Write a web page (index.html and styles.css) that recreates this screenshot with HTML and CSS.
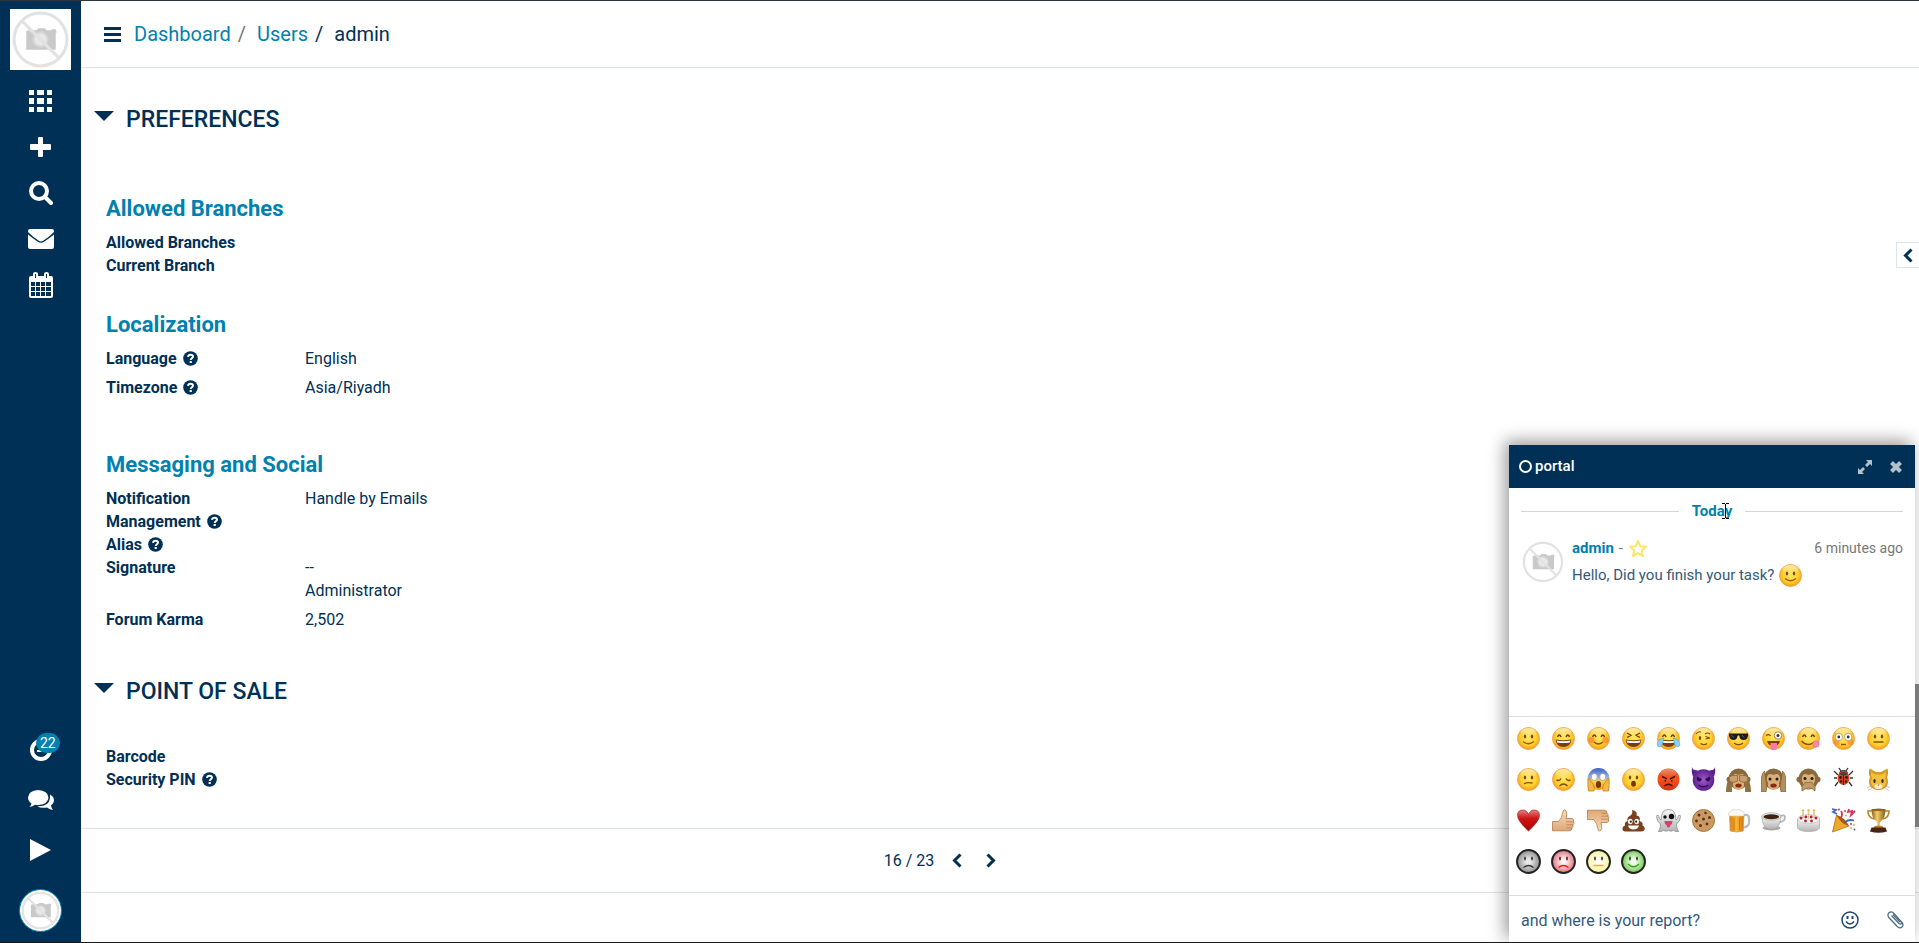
FILE: index.html
```html
<!DOCTYPE html>
<html lang="en">
<head>
    <meta charset="UTF-8">
    <meta name="viewport" content="width=device-width, initial-scale=1.0">
    <title>admin - Users</title>
    <link rel="stylesheet" href="styles.css">
</head>
<body>
    <!-- Shared shapes -->
    <svg class="sprite" aria-hidden="true">
        <defs>
            <radialGradient id="gYellow" cx="50%" cy="45%" r="55%">
                <stop offset="0" stop-color="#ffe566"/>
                <stop offset="0.65" stop-color="#ffd02e"/>
                <stop offset="1" stop-color="#f29a1f"/>
            </radialGradient>
            <linearGradient id="gShine" x1="0" y1="0" x2="0" y2="1">
                <stop offset="0" stop-color="#fff" stop-opacity="0.6"/>
                <stop offset="1" stop-color="#fff" stop-opacity="0"/>
            </linearGradient>
            <linearGradient id="gRed" x1="0" y1="0" x2="0" y2="1">
                <stop offset="0" stop-color="#e0531f"/>
                <stop offset="0.5" stop-color="#f4511e"/>
                <stop offset="1" stop-color="#c93616"/>
            </linearGradient>
            <linearGradient id="gScream" x1="0" y1="0" x2="0" y2="1">
                <stop offset="0" stop-color="#3b5fc4"/>
                <stop offset="0.4" stop-color="#8fb0e6"/>
                <stop offset="0.6" stop-color="#ffd53e"/>
                <stop offset="1" stop-color="#f2a022"/>
            </linearGradient>
            <radialGradient id="gPurple">
                <stop offset="0" stop-color="#a259c9"/>
                <stop offset="1" stop-color="#5d1f8f"/>
            </radialGradient>
            <linearGradient id="gHeart" x1="0" y1="0" x2="0" y2="1">
                <stop offset="0" stop-color="#e88080"/>
                <stop offset="0.4" stop-color="#cf1515"/>
                <stop offset="1" stop-color="#a80000"/>
            </linearGradient>
            <linearGradient id="gSkin" x1="0" y1="0" x2="0" y2="1">
                <stop offset="0" stop-color="#f8dcb8"/>
                <stop offset="1" stop-color="#dfa876"/>
            </linearGradient>
            <linearGradient id="gGold" x1="0" y1="0" x2="1" y2="0">
                <stop offset="0" stop-color="#8a5a16"/>
                <stop offset="0.4" stop-color="#f3d06b"/>
                <stop offset="1" stop-color="#8a5a16"/>
            </linearGradient>
            <linearGradient id="gBeer" x1="0" y1="0" x2="1" y2="0">
                <stop offset="0" stop-color="#d97c10"/>
                <stop offset="0.5" stop-color="#f9b733"/>
                <stop offset="1" stop-color="#cf6f0c"/>
            </linearGradient>
            <linearGradient id="gGrey" x1="0" y1="0" x2="0" y2="1">
                <stop offset="0" stop-color="#f7f7f7"/>
                <stop offset="1" stop-color="#b4b4b4"/>
            </linearGradient>
            <radialGradient id="gRingGrey"><stop offset="0.2" stop-color="#e8e8e8"/><stop offset="1" stop-color="#8e8e8e"/></radialGradient>
            <radialGradient id="gRingRed"><stop offset="0.2" stop-color="#fff0f0"/><stop offset="1" stop-color="#e2717d"/></radialGradient>
            <radialGradient id="gRingYellow"><stop offset="0.2" stop-color="#fffff4"/><stop offset="1" stop-color="#f7f39b"/></radialGradient>
            <radialGradient id="gRingGreen"><stop offset="0.2" stop-color="#efffe8"/><stop offset="1" stop-color="#72c552"/></radialGradient>
        </defs>

        <symbol id="no-photo" viewBox="0 0 60 60">
            <path fill="#c9c9c9" d="M18 21h8l2-2h6l2 2h5v-1h4l1 3h-1v17H16V22z"/>
            <circle cx="30" cy="30" r="8" fill="#d6d6d6"/>
            <circle cx="30" cy="30" r="6" fill="#e8e8e8"/>
            <path stroke="#e2e2e2" stroke-width="3" d="M12 12l37 37"/>
            <circle cx="30" cy="30" r="26" fill="none" stroke="#e2e2e2" stroke-width="3"/>
        </symbol>
        <symbol id="help" viewBox="0 0 15 15">
            <circle cx="7.500" cy="7.500" r="7.300" fill="#003055"/>
            <path fill="none" stroke="#fff" stroke-width="2" d="M5 5.800C5.200 4.200 6.300 3.700 7.500 3.700c1.500 0 2.500.8 2.500 1.900 0 1.600-2.300 1.600-2.300 3.500"/>
            <path fill="#fff" d="M6.600 10h2.200v2H6.600z"/>
        </symbol>
        <symbol id="chev-left" viewBox="0 0 10 15"><path fill="none" stroke="#003055" stroke-width="3" d="M8.500 1.500l-6 6 6 6"/></symbol>
        <symbol id="chev-right" viewBox="0 0 10 15"><path fill="none" stroke="#003055" stroke-width="3" d="M1.500 1.500l6 6-6 6"/></symbol>

        <symbol id="face" viewBox="0 0 25 25">
            <circle cx="12.500" cy="12.500" r="11" fill="url(#gYellow)" stroke="#eda244" stroke-width="0.800"/>
            <ellipse cx="12.500" cy="6.500" rx="8" ry="4.500" fill="url(#gShine)"/>
        </symbol>
        <symbol id="eyes" viewBox="0 0 25 25">
            <g fill="#7a4a12"><ellipse cx="9" cy="10.500" rx="1.200" ry="1.900"/><ellipse cx="16" cy="10.500" rx="1.200" ry="1.900"/></g>
        </symbol>
        <symbol id="happy-eyes" viewBox="0 0 25 25">
            <path fill="none" stroke="#6b3d0c" stroke-width="1.400" d="M6.500 11q1.800-4 3.600 0M15 11q1.800-4 3.600 0"/>
        </symbol>
        <symbol id="grin" viewBox="0 0 25 25">
            <path fill="#7a3d10" d="M4.500 13.500q8 1.600 16 0-1 7.500-8 7.500t-8-7.500z"/>
            <path fill="#fff" d="M5.500 14.500q7 1.400 14 0l-.6 2q-6.400 1.200-12.800 0z"/>
        </symbol>

        <symbol id="e-smile" viewBox="0 0 25 25"><use href="#face"/><use href="#eyes"/><path fill="none" stroke="#9a5c12" stroke-width="1.300" d="M7 15.500q5.500 4.500 11 0"/></symbol>
        <symbol id="e-grin" viewBox="0 0 25 25"><use href="#face"/><use href="#happy-eyes"/><use href="#grin"/></symbol>
        <symbol id="e-blush" viewBox="0 0 25 25"><use href="#face"/><g fill="#f4743a" opacity="0.600"><circle cx="5.500" cy="14" r="3"/><circle cx="19.500" cy="14" r="3"/></g><use href="#happy-eyes"/><path fill="none" stroke="#9a4a12" stroke-width="1.300" d="M8 16q4.500 4 9 0"/></symbol>
        <symbol id="e-laugh" viewBox="0 0 25 25"><use href="#face"/><use href="#grin"/><path fill="none" stroke="#6b3d0c" stroke-width="1.300" d="M6 7l4 2.300-4 2.200M19 7l-4 2.300 4 2.200"/></symbol>
        <symbol id="e-joy" viewBox="0 0 25 25"><use href="#face"/><use href="#happy-eyes"/><use href="#grin"/><g fill="#8bd0f5" stroke="#4e9fd6" stroke-width="0.600"><path d="M7.500 12Q1 14 1.200 18.500q.3 2.500 2.500 2.300Q7 20 7.500 12z"/><path d="M17.500 12q6.500 2 6.300 6.500-.3 2.500-2.500 2.300Q18 20 17.500 12z"/></g></symbol>
        <symbol id="e-wink" viewBox="0 0 25 25"><use href="#face"/><path fill="none" stroke="#7a4a12" stroke-width="1.200" d="M5 8q2-3 5-2M14 8q3-2 5 0M14.500 10.500l4.500 1.500M14.500 13l4.500-1M9.500 17.500q3.500 2.500 6.500 0"/><ellipse cx="9" cy="12" rx="1.200" ry="1.900" fill="#7a4a12"/></symbol>
        <symbol id="e-cool" viewBox="0 0 25 25"><use href="#face"/><path fill="#1c1c1c" d="M3 7.500h19v2q-.5 4.500-4.500 4.500T13.300 9.500h-1.600Q11 14 7.500 14T3 9.500z"/><path stroke="#777" stroke-width="0.800" d="M5.500 9l2 2.500M16 9l2 2.500"/><path fill="none" stroke="#8a4f10" stroke-width="1.400" d="M8 17q4.500 3.500 9 0"/></symbol>
        <symbol id="e-tongue" viewBox="0 0 25 25"><use href="#face"/><path fill="none" stroke="#7a4a12" stroke-width="1.400" d="M5 9.500q3-2 4.500.5"/><circle cx="17" cy="9.500" r="3.700" fill="#fff" stroke="#8a6a3a" stroke-width="0.800"/><circle cx="17" cy="9.500" r="1.500" fill="#333"/><path fill="#7a3d10" d="M6 15h13q-1 5-6.500 5T6 15z"/><path fill="#f77ba6" d="M9.500 17h6.500v4q0 3.200-3.200 3.200T9.500 21z"/></symbol>
        <symbol id="e-yum" viewBox="0 0 25 25"><use href="#face"/><use href="#happy-eyes"/><path fill="none" stroke="#8a4f10" stroke-width="1.500" d="M5.500 15q6 6.500 13 1"/><circle cx="20" cy="18" r="3.200" fill="#f58ab0" stroke="#e0608f" stroke-width="0.600"/></symbol>
        <symbol id="e-flushed" viewBox="0 0 25 25"><use href="#face"/><g fill="#f4743a" opacity="0.500"><circle cx="5.500" cy="16" r="3"/><circle cx="19.500" cy="16" r="3"/></g><g fill="#fff" stroke="#9c8760" stroke-width="0.700"><circle cx="7.800" cy="11" r="3.700"/><circle cx="17.200" cy="11" r="3.700"/></g><circle cx="7.800" cy="11" r="1.400" fill="#333"/><circle cx="17.200" cy="11" r="1.400" fill="#333"/><path stroke="#8a4f10" stroke-width="1.400" d="M10 18.500h5"/></symbol>
        <symbol id="e-neutral" viewBox="0 0 25 25"><use href="#face"/><use href="#eyes"/><path stroke="#8a4f10" stroke-width="1.500" d="M7.500 16h10"/></symbol>

        <symbol id="e-confused" viewBox="0 0 25 25"><use href="#face"/><use href="#eyes"/><path fill="none" stroke="#8a4f10" stroke-width="1.400" d="M8 17q3-2 8.500-1"/></symbol>
        <symbol id="e-sad" viewBox="0 0 25 25"><use href="#face"/><path fill="none" stroke="#7a4a12" stroke-width="1.400" d="M5.500 13q3 1.500 4.500-1.500M15 11.500q1.500 3 4.500 1.500M8.500 19q4-4 8 0"/></symbol>
        <symbol id="e-scream" viewBox="0 0 25 25"><circle cx="12.500" cy="12" r="11" fill="url(#gScream)"/><g fill="#fff" stroke="#8a8a8a" stroke-width="0.600"><ellipse cx="8.300" cy="10" rx="3" ry="3.600"/><ellipse cx="16.700" cy="10" rx="3" ry="3.600"/></g><ellipse cx="12.500" cy="17.500" rx="2.600" ry="3.500" fill="#7a3505"/><path fill="#f5b945" stroke="#bd7316" stroke-width="0.700" d="M2 12q1.500-2 2 1l3 4q2 2 1 7H2.500q-1-5-.5-12zM23 12q-1.500-2-2 1l-3 4q-2 2-1 7h5.500q1-5 .5-12z"/></symbol>
        <symbol id="e-wow" viewBox="0 0 25 25"><use href="#face"/><use href="#eyes"/><ellipse cx="12.500" cy="16.700" rx="2.400" ry="3" fill="#7a3505"/></symbol>
        <symbol id="e-rage" viewBox="0 0 25 25"><circle cx="12.500" cy="12.500" r="11" fill="url(#gRed)"/><ellipse cx="12.500" cy="6" rx="8" ry="4" fill="url(#gShine)" opacity="0.600"/><path fill="none" stroke="#4c1200" stroke-width="1.500" d="M6 9.500l5 2.500M19 9.500L14 12M8.500 13.800h1.500M15 13.800h1.500M8.500 19q4-3.500 8 0"/></symbol>
        <symbol id="e-imp" viewBox="0 0 25 25"><path fill="#5d1f8f" d="M1 0q1 4 6 3l-5 7Q0 5 1 0zM24 0q-1 4-6 3l5 7q2-5 1-10z"/><circle cx="12.500" cy="13" r="10.800" fill="url(#gPurple)"/><path fill="#2d0b4a" d="M6 9.500l5 2.500q-1 3-3.500 2.300T6 9.500zM19 9.500L14 12q1 3 3.500 2.300T19 9.500z"/><path fill="none" stroke="#2d0b4a" stroke-width="1.500" d="M7.500 18q5 3.500 10 0"/></symbol>
        <symbol id="monkey" viewBox="0 0 25 25"><g fill="#8a6a3c"><circle cx="3.500" cy="12.500" r="3"/><circle cx="21.500" cy="12.500" r="3"/><ellipse cx="12.500" cy="12" rx="10" ry="10.500"/></g><path fill="#d8b077" d="M12.500 8Q18 5 19 10.500q.5 3.500-1 5 1 7-5.500 7T7 15.500q-1.500-1.500-1-5Q7 5 12.500 8z"/><ellipse cx="12.500" cy="18.500" rx="3.200" ry="2" fill="#8b2b16"/></symbol>
        <symbol id="e-see" viewBox="0 0 25 25"><use href="#monkey"/><path fill="#8f7040" d="M0 25q0-8 3-13h4q-2 6-1 13zM25 25q0-8-3-13h-4q2 6 1 13z"/><path fill="#c9a070" stroke="#7d5c30" stroke-width="0.700" d="M3 10q3-2.500 8.500-1.500v5.500q-4 2.500-8 .5zM22 10q-3-2.500-8.500-1.500v5.500q4 2.500 8 .5z"/></symbol>
        <symbol id="e-hear" viewBox="0 0 25 25"><use href="#monkey"/><circle cx="9" cy="12" r="1.500" fill="#241708"/><circle cx="16" cy="12" r="1.500" fill="#241708"/><path fill="#b48f5c" stroke="#7d5c30" stroke-width="0.700" d="M0 25V16Q0 7 3.500 4L5 14q1.500 5 0 11zM25 25V16q0-9-3.500-12L20 14q-1.500 5 0 11z"/></symbol>
        <symbol id="e-speak" viewBox="0 0 25 25"><use href="#monkey"/><circle cx="9" cy="11.500" r="1.500" fill="#241708"/><circle cx="16" cy="11.500" r="1.500" fill="#241708"/><path fill="#c29a68" stroke="#7d5c30" stroke-width="0.700" d="M6 24q-1-5 2-7.500 2-2 4.500-1 2.500-1 4.500 1 3 2.500 2 7.500-3-3.500-6.500-3T6 24z"/></symbol>
        <symbol id="e-bug" viewBox="0 0 25 25"><path fill="none" stroke="#333" stroke-width="1.300" d="M10 4L8 1M15 4l2-3M7 8L3 4M18 8l4-4M6 11H3M19 11h3M7 15l-3 4M18 15l3 4"/><path fill="#3b434d" d="M8 7q0-4 4.500-4T17 7z"/><ellipse cx="12.500" cy="11" rx="6" ry="7" fill="#d8431c"/><path fill="#3b434d" d="M8 7q4.500-4 9 0-4.500 2.500-9 0z"/><path stroke="#2b1a12" stroke-width="1" d="M12.500 8v10"/><g fill="#2b1a12"><circle cx="9.500" cy="10.500" r="1.400"/><circle cx="15.500" cy="10.500" r="1.400"/><circle cx="10" cy="14.500" r="1.200"/><circle cx="15" cy="14.500" r="1.200"/></g></symbol>
        <symbol id="e-cat" viewBox="0 0 25 25"><path fill="#d59a24" d="M3.500 1.500L10 5h5l6.500-3.500Q23 7 21 10q2 5 0 9-3 4-8.500 4T4 19q-2-4 0-9-2-3-.5-8.500z"/><path fill="#f2c23d" d="M5 5l4 2.500h7L20 5q0 4-1 6 2 5 0 7-3 4-6.500 4T6 18q-2-2 0-7-1-2-1-6z"/><ellipse cx="8.500" cy="14" rx="1.200" ry="2" fill="#3c2a08"/><ellipse cx="16.500" cy="14" rx="1.200" ry="2" fill="#3c2a08"/><ellipse cx="12.500" cy="19.500" rx="4" ry="2.500" fill="#fff0c4"/><path fill="#b0603a" d="M11.300 17.500h2.400l-1.200 1.500z"/><path stroke="#aaa" stroke-width="0.700" d="M6 19l-5 1.500M6 21l-4 2.500M19 19l5 1.500M19 21l4 2.500"/></symbol>

        <symbol id="e-heart" viewBox="0 0 25 25"><path fill="url(#gHeart)" stroke="#9a1010" stroke-width="0.600" d="M12.500 23Q1.500 13 1.500 7.500 1.500 2 6.800 2q4.200 0 5.700 4.500Q14 2 18.200 2q5.300 0 5.300 5.500 0 5.500-11 15.500z"/></symbol>
        <symbol id="e-up" viewBox="0 0 25 25"><path fill="url(#gSkin)" stroke="#b07a48" stroke-width="0.800" d="M1.500 13.500h6q4-4 4.300-9Q12 2 13.500 2q3.500.5 1.500 8.500h6q2.500.5 1.500 3.300 1 1.600-.5 3 .5 2-1 3 .2 3-3 3H1.500z"/><path stroke="#b07a48" stroke-width="0.700" d="M15 13.800h7M15.500 16.800H22M15.500 19.800H21"/></symbol>
        <symbol id="e-down" viewBox="0 0 25 25"><g transform="matrix(1 0 0 -1 0 25)"><use href="#e-up"/></g></symbol>
        <symbol id="e-poop" viewBox="0 0 25 25"><path fill="#7a4222" d="M11 2q6 1 4.500 5.500Q20 8 18.500 13q4 1 3 4.500 3 1.500 2 4.500-1 1.500-4 1.500h-14q-3.500 0-4-2-.5-3 2.500-4-1-3.500 2.500-4.500-1-4 3-5.500Q12 6 11 2z"/><g fill="#fff"><ellipse cx="9.300" cy="13.500" rx="2.300" ry="2.800"/><ellipse cx="15.700" cy="13.500" rx="2.300" ry="2.800"/><path d="M7 17.500h11q-1 4-5.500 4T7 17.500z"/></g><circle cx="9.800" cy="13.700" r="1.100" fill="#222"/><circle cx="15.200" cy="13.700" r="1.100" fill="#222"/></symbol>
        <symbol id="e-ghost" viewBox="0 0 25 25"><path fill="url(#gGrey)" stroke="#8d8d8d" stroke-width="0.800" d="M5 12q0-10.500 7.500-10.500T20 12q2-1 2.500-4.500 2-1 2 1-.2 5-4 7.500 0 5 2 7.500-3 .5-5-1.200-2 1.700-5 .2-3 1.500-5-.2-2 1.700-5 1.200 2-2.500 2-7.500Q.8 13.500.5 8.500q0-2 2-1Q3 11 5 12z"/><circle cx="9" cy="9" r="1.700" fill="#111"/><circle cx="15.500" cy="8.500" r="2.700" fill="#111"/><path fill="#d9406c" d="M8.500 13h8q0 3.500-2 4-.3 2.500-2 2.500t-2-2.500q-2-.5-2-4z"/></symbol>
        <symbol id="e-cookie" viewBox="0 0 25 25"><circle cx="12.500" cy="12.500" r="11" fill="#c99a62" stroke="#98622a" stroke-width="0.800"/><g fill="#5b3417"><circle cx="8" cy="7" r="1.500"/><circle cx="14.500" cy="5" r="1.300"/><circle cx="18.500" cy="9.500" r="1.500"/><circle cx="12.500" cy="11" r="1.500"/><circle cx="5.500" cy="13" r="1.400"/><circle cx="9.500" cy="17.500" r="1.500"/><circle cx="16" cy="16" r="1.400"/></g></symbol>
        <symbol id="e-beer" viewBox="0 0 25 25"><path fill="none" stroke="#b9bcc0" stroke-width="2.200" d="M17 7.500q6-2 6 2.500v5q-.5 4-6 4.500"/><path fill="url(#gBeer)" stroke="#c9a060" stroke-width="0.800" d="M3.500 6h14.500l-.8 17q-6.500 2-13 0z"/><path stroke="#c96f0c" stroke-width="0.800" d="M8 10v12M13.500 10v12"/><path fill="#fbf8ef" stroke="#c9c4b4" stroke-width="0.600" d="M3 8Q1.500 4.500 4.500 3.500 6.500.5 10 2q3-1.500 5 .5 4 .5 3 5.500z"/></symbol>
        <symbol id="e-coffee" viewBox="0 0 25 25"><ellipse cx="10.500" cy="20" rx="9" ry="2.500" fill="#aaa"/><path fill="none" stroke="#b5b5b5" stroke-width="1.800" d="M18.500 8q5.500-2 5.500 1.500 0 4-6.500 5"/><path fill="url(#gGrey)" stroke="#999" stroke-width="0.600" d="M.8 8.500q1 12 7 12.500h5q6-.5 7-12.500z"/><ellipse cx="10.300" cy="8.500" rx="9.500" ry="3.700" fill="#ececec" stroke="#999" stroke-width="0.600"/><ellipse cx="10.300" cy="8.800" rx="7.800" ry="2.500" fill="#3d2412"/></symbol>
        <symbol id="e-cake" viewBox="0 0 25 25"><path fill="url(#gGrey)" stroke="#a5a5a5" stroke-width="0.700" d="M1.500 11v9q2 3.500 11 3.500t11-3.500v-9z"/><ellipse cx="12.500" cy="11" rx="11" ry="4.500" fill="#f6f3ea" stroke="#b7b7b7" stroke-width="0.600"/><path stroke="#d8c690" stroke-width="1.600" d="M7 10V4M12.500 11V4M18 10V4"/><g fill="#f2b632"><circle cx="7" cy="2.500" r="1.200"/><circle cx="12.500" cy="2.500" r="1.200"/><circle cx="18" cy="2.500" r="1.200"/></g><g fill="#b5203c"><circle cx="5" cy="10" r="1.500"/><circle cx="9.800" cy="9" r="1.400"/><circle cx="15.200" cy="9" r="1.400"/><circle cx="20" cy="10" r="1.500"/><circle cx="9.500" cy="13" r="1.400"/><circle cx="15.500" cy="13" r="1.400"/></g></symbol>
        <symbol id="e-party" viewBox="0 0 25 25"><path fill="#eda927" stroke="#a8620e" stroke-width="0.700" d="M5.500 7L18 18 1.500 24z"/><path fill="#a65c12" d="M5.500 7q5 1 8 4.500t4.500 6.500q-5-1-8-4.500T5.500 7z"/><g fill="none" stroke-width="1.800"><path stroke="#3d68c8" d="M1 1l4 1-3 2 4 2M14 14q4-3 9-1.500"/><path stroke="#d1345c" d="M10 10q2-4 0-7M18 1l-1 3 4-1-1 4 4-4"/></g><g fill="#d1345c"><circle cx="8" cy="1.500" r="1"/><circle cx="14" cy="3" r="1"/><circle cx="20" cy="16" r="1"/></g><g fill="#e8b429"><circle cx="15" cy="7.500" r="1"/><circle cx="23" cy="17" r="1"/><circle cx="20" cy="20" r="1"/></g><circle cx="23.500" cy="21.500" r="1" fill="#3d68c8"/></symbol>
        <symbol id="e-trophy" viewBox="0 0 25 25"><path fill="none" stroke="#b5862c" stroke-width="1.700" d="M6.500 3H2q0 7 6.500 8M18.500 3H23q0 7-6.500 8"/><path fill="url(#gGold)" d="M5.500 1h14q0 9-4.500 12-1.500 1-1.500 5h-2q0-4-1.500-5Q5.500 10 5.500 1z"/><ellipse cx="12.500" cy="1.800" rx="7" ry="1.300" fill="#8f6420"/><path fill="#b5862c" d="M8 18.500q4.500-2 9 0v1.500H8z"/><path fill="#4a2312" d="M5.500 19.500h14l1.500 4q-8.500 2.500-17 0z"/></symbol>

        <symbol id="ring-eyes" viewBox="0 0 25 25"><g fill="#333"><ellipse cx="9" cy="9.500" rx="0.900" ry="2"/><ellipse cx="16" cy="9.500" rx="0.900" ry="2"/></g></symbol>
        <symbol id="e-rgrey" viewBox="0 0 25 25"><circle cx="12.500" cy="12.500" r="11.500" fill="url(#gRingGrey)" stroke="#222" stroke-width="1.900"/><use href="#ring-eyes"/><path fill="none" stroke="#333" stroke-width="1.300" d="M7.500 18.500q5-4 10 0"/></symbol>
        <symbol id="e-rred" viewBox="0 0 25 25"><circle cx="12.500" cy="12.500" r="11.500" fill="url(#gRingRed)" stroke="#222" stroke-width="1.900"/><use href="#ring-eyes"/><path fill="none" stroke="#e01e1e" stroke-width="1.300" d="M7.500 18.500q5-4 10 0"/></symbol>
        <symbol id="e-ryellow" viewBox="0 0 25 25"><circle cx="12.500" cy="12.500" r="11.500" fill="url(#gRingYellow)" stroke="#222" stroke-width="1.900"/><use href="#ring-eyes"/><path stroke="#ffa51e" stroke-width="1.500" d="M7.500 16.500h10"/></symbol>
        <symbol id="e-rgreen" viewBox="0 0 25 25"><circle cx="12.500" cy="12.500" r="11.500" fill="url(#gRingGreen)" stroke="#222" stroke-width="1.900"/><use href="#ring-eyes"/><path fill="none" stroke="#3b9a22" stroke-width="1.300" d="M7 15q5.500 5.500 11 0"/></symbol>
    </svg>

    <!-- Sidebar -->
    <nav class="sidebar">
        <a class="logo" href="#" aria-label="Home"><svg><use href="#no-photo"/></svg></a>
        <button class="side-btn" aria-label="Apps">
            <svg width="23" height="22" viewBox="0 0 23 22" fill="#fff"><path d="M0 0h5v5H0zM8 0h7v5H8zM18 0h5v5h-5zM0 8h5v6H0zM8 8h7v6H8zM18 8h5v6h-5zM0 17h5v5H0zM8 17h7v5H8zM18 17h5v5h-5z"/></svg>
        </button>
        <button class="side-btn" aria-label="Create">
            <svg width="21" height="20" viewBox="0 0 21 20" fill="#fff"><path d="M9 0h3q1 0 1 1v6h7q1 0 1 1v4q0 1-1 1h-7v6q0 1-1 1H9q-1 0-1-1v-6H1q-1 0-1-1V8q0-1 1-1h7V1q0-1 1-1z"/></svg>
        </button>
        <button class="side-btn" aria-label="Search">
            <svg width="24" height="24" viewBox="0 0 24 24" fill="none" stroke="#fff"><circle cx="10" cy="10" r="8" stroke-width="4"/><path stroke-width="4" stroke-linecap="round" d="M16 16l6 6"/></svg>
        </button>
        <button class="side-btn" aria-label="Mail">
            <svg width="26" height="20" viewBox="0 0 26 20" fill="#fff"><path d="M2 0h22q2 0 2 2v1q-5 5-10.500 8.500Q13 13.500 10.500 11.500 5 8 0 3V2q0-2 2-2zM0 5.500Q5 9.500 9.500 12.500q3.500 2.500 7 0Q21 9.500 26 5.500V18q0 2-2 2H2q-2 0-2-2z"/></svg>
        </button>
        <button class="side-btn" aria-label="Calendar">
            <svg width="24" height="26" viewBox="0 0 24 26"><path fill="#fff" d="M2 4h2V2q0-2 2.500-2T9 2v2h6V2q0-2 2.500-2T20 2v2h2q2 0 2 2v18q0 2-2 2H2q-2 0-2-2V6q0-2 2-2z"/><path fill="#003055" d="M6 2h1v4H6zM17 2h1v4h-1zM2 10h4v4H2zM7 10h4v4H7zM12 10h4v4h-4zM17 10h5v4h-5zM2 15h4v4H2zM7 15h4v4H7zM12 15h4v4h-4zM17 15h5v4h-5zM2 20h4v4H2zM7 20h4v4H7zM12 20h4v4h-4zM17 20h5v4h-5z"/></svg>
        </button>
        <div class="side-bottom">
            <button class="side-btn tall" aria-label="Activities">
                <svg width="22" height="22" viewBox="0 0 22 22" fill="none" stroke="#fff"><circle cx="11" cy="11" r="9" stroke-width="4"/><path stroke-width="2" d="M11 6v6H7"/></svg>
                <span class="badge">22</span>
            </button>
            <button class="side-btn tall" aria-label="Conversations">
                <svg width="26" height="20" viewBox="0 0 26 20" fill="#fff"><path d="M10 0q10 .5 10.500 7.500Q20 14 11 15q-2 0-4-.3Q4.500 16.500 1.500 17q1.700-2 2-3.500Q0 11 0 7.500.5.500 10 0z"/><path d="M22 4.500q4 2 4 6 0 3-3 5 .3 2 2 4.500-3-.5-6-2.500-6 1-10-1.200Q21 17 22 8z"/></svg>
            </button>
            <button class="side-btn tall" aria-label="Start">
                <svg width="21" height="22" viewBox="0 0 21 22" fill="#fff"><path d="M0 0l21 11L0 22z"/></svg>
            </button>
            <button class="user" aria-label="admin"><svg><use href="#no-photo"/></svg></button>
        </div>
    </nav>

    <!-- Main content -->
    <main class="main">
        <header class="topbar">
            <button class="menu" aria-label="Menu"><i></i><i></i><i></i></button>
            <div class="breadcrumb">
                <a href="#">Dashboard</a><span class="sep muted">/</span><a href="#">Users</a><span class="sep">/</span><span>admin</span>
            </div>
        </header>

        <div class="form">
            <h2><i class="caret"></i>PREFERENCES</h2>

            <section class="group">
                <h3>Allowed Branches</h3>
                <dl>
                    <dt>Allowed Branches</dt><dd></dd>
                    <dt>Current Branch</dt><dd></dd>
                </dl>
            </section>

            <section class="group">
                <h3>Localization</h3>
                <dl class="loose">
                    <dt>Language <svg class="help"><use href="#help"/></svg></dt><dd>English</dd>
                    <dt>Timezone <svg class="help"><use href="#help"/></svg></dt><dd>Asia/Riyadh</dd>
                </dl>
            </section>

            <section class="group messaging">
                <h3>Messaging and Social</h3>
                <dl>
                    <dt>Notification Management <svg class="help"><use href="#help"/></svg></dt><dd>Handle by Emails</dd>
                    <dt>Alias <svg class="help"><use href="#help"/></svg></dt><dd></dd>
                    <dt>Signature</dt><dd class="signature">--<br>Administrator</dd>
                    <dt>Forum Karma</dt><dd>2,502</dd>
                </dl>
            </section>

            <h2><i class="caret"></i>POINT OF SALE</h2>

            <section class="group pos">
                <dl>
                    <dt>Barcode</dt><dd></dd>
                    <dt>Security PIN <svg class="help"><use href="#help"/></svg></dt><dd></dd>
                </dl>
            </section>
        </div>

        <div class="pager">
            <span>16 / 23</span>
            <button aria-label="Previous"><svg width="10" height="15"><use href="#chev-left"/></svg></button>
            <button aria-label="Next"><svg width="10" height="15"><use href="#chev-right"/></svg></button>
        </div>
    </main>

    <button class="panel-toggle" aria-label="Open panel"><svg width="10" height="15"><use href="#chev-left"/></svg></button>
    <div class="scroll-thumb"></div>

    <!-- Chat window -->
    <section class="chat">
        <header class="chat-head">
            <i class="status"></i>
            <span class="chat-title">portal</span>
            <button aria-label="Expand">
                <svg width="14" height="14" viewBox="0 0 14 14" fill="#b3c1cc"><path d="M8 0h6v6l-2-2-3 3-2-2 3-3zM0 8l2 2 3-3 2 2-3 3 2 2H0z"/></svg>
            </button>
            <button aria-label="Close">
                <svg width="12" height="12" viewBox="0 0 12 12" fill="none" stroke="#b3c1cc" stroke-width="4"><path d="M1.500 1.500l9 9M10.500 1.500l-9 9"/></svg>
            </button>
        </header>

        <div class="chat-body">
            <div class="day"><span>Today
                <svg class="ibeam" width="7" height="16" viewBox="0 0 7 16" fill="none" stroke="#000"><path d="M0 .5h3M4 .5h3M3.500 1v14M0 15.500h3M4 15.500h3"/></svg></span>
            </div>
            <article class="message">
                <svg class="avatar"><use href="#no-photo"/></svg>
                <div class="message-main">
                    <div class="message-head">
                        <a href="#">admin</a><span>-</span>
                        <svg width="20" height="19" viewBox="0 0 20 19"><path fill="none" stroke="#ffe566" stroke-width="2" stroke-linejoin="round" d="M10 2l2.300 5.200 5.700.6-4.300 3.800 1.300 5.600-5-3-5 3 1.300-5.600L2 7.800l5.700-.6z"/></svg>
                        <time>6 minutes ago</time>
                    </div>
                    <p>Hello, Did you finish your task? <svg class="emoji"><use href="#e-smile"/></svg></p>
                </div>
            </article>
        </div>

        <div class="emojis">
            <button><svg class="emoji"><use href="#e-smile"/></svg></button>
            <button><svg class="emoji"><use href="#e-grin"/></svg></button>
            <button><svg class="emoji"><use href="#e-blush"/></svg></button>
            <button><svg class="emoji"><use href="#e-laugh"/></svg></button>
            <button><svg class="emoji"><use href="#e-joy"/></svg></button>
            <button><svg class="emoji"><use href="#e-wink"/></svg></button>
            <button><svg class="emoji"><use href="#e-cool"/></svg></button>
            <button><svg class="emoji"><use href="#e-tongue"/></svg></button>
            <button><svg class="emoji"><use href="#e-yum"/></svg></button>
            <button><svg class="emoji"><use href="#e-flushed"/></svg></button>
            <button><svg class="emoji"><use href="#e-neutral"/></svg></button>
            <button><svg class="emoji"><use href="#e-confused"/></svg></button>
            <button><svg class="emoji"><use href="#e-sad"/></svg></button>
            <button><svg class="emoji"><use href="#e-scream"/></svg></button>
            <button><svg class="emoji"><use href="#e-wow"/></svg></button>
            <button><svg class="emoji"><use href="#e-rage"/></svg></button>
            <button><svg class="emoji"><use href="#e-imp"/></svg></button>
            <button><svg class="emoji"><use href="#e-see"/></svg></button>
            <button><svg class="emoji"><use href="#e-hear"/></svg></button>
            <button><svg class="emoji"><use href="#e-speak"/></svg></button>
            <button><svg class="emoji"><use href="#e-bug"/></svg></button>
            <button><svg class="emoji"><use href="#e-cat"/></svg></button>
            <button><svg class="emoji"><use href="#e-heart"/></svg></button>
            <button><svg class="emoji"><use href="#e-up"/></svg></button>
            <button><svg class="emoji"><use href="#e-down"/></svg></button>
            <button><svg class="emoji"><use href="#e-poop"/></svg></button>
            <button><svg class="emoji"><use href="#e-ghost"/></svg></button>
            <button><svg class="emoji"><use href="#e-cookie"/></svg></button>
            <button><svg class="emoji"><use href="#e-beer"/></svg></button>
            <button><svg class="emoji"><use href="#e-coffee"/></svg></button>
            <button><svg class="emoji"><use href="#e-cake"/></svg></button>
            <button><svg class="emoji"><use href="#e-party"/></svg></button>
            <button><svg class="emoji"><use href="#e-trophy"/></svg></button>
            <button><svg class="emoji"><use href="#e-rgrey"/></svg></button>
            <button><svg class="emoji"><use href="#e-rred"/></svg></button>
            <button><svg class="emoji"><use href="#e-ryellow"/></svg></button>
            <button><svg class="emoji"><use href="#e-rgreen"/></svg></button>
        </div>

        <form class="composer">
            <input type="text" aria-label="Message" value="and where is your report?">
            <button type="button" aria-label="Emoji">
                <svg width="18" height="18" viewBox="0 0 18 18" fill="none" stroke="#1d476b" stroke-width="1.500"><circle cx="9" cy="9" r="8"/><path d="M5 10.500q4 5 8 0"/><path stroke-width="2" d="M6.500 5v3M11.500 5v3"/></svg>
            </button>
            <button type="button" aria-label="Attach a file">
                <svg width="17" height="18" viewBox="0 0 17 18" fill="none" stroke="#4c6d88" stroke-width="1.300"><path d="M4.500 4.500l7.500 8q1.500 1 2.200.3t-.2-2.300L6.500 2Q4 0 2 1.800T1.800 6.500l8.700 9.300q2.500 2 4.500.2t0-4.500L9.500 5.800"/><path d="M6 3.500l7 7.500"/></svg>
            </button>
        </form>
    </section>
</body>
</html>
```

FILE: styles.css
```css
* {
    box-sizing: border-box;
}
body {
    margin: 0;
    height: 100vh;
    display: flex;
    position: relative;
    overflow: hidden;
    border-top: 1px solid #2b3640;
    border-bottom: 1px solid #1a1a1a;
    background-color: #fff;
    color: #003055;
    font-family: Roboto, sans-serif;
    font-size: 16px;
    line-height: 23px;
}
button {
    padding: 0;
    border: none;
    background: none;
    font: inherit;
    color: inherit;
    cursor: pointer;
}
svg {
    display: block;
}
a {
    color: #0081b0;
    text-decoration: none;
}
.sprite {
    position: absolute;
    width: 0;
    height: 0;
}

/* Sidebar */
.sidebar {
    width: 81px;
    flex: none;
    display: flex;
    flex-direction: column;
    align-items: center;
    padding: 8px 0 10px;
    background-color: #003055;
}
.logo {
    background-color: #fff;
    margin-bottom: 8px;
}
.logo svg {
    width: 61px;
    height: 61px;
}
.side-btn {
    width: 100%;
    height: 46px;
    display: flex;
    align-items: center;
    justify-content: center;
    position: relative;
}
.side-btn.tall {
    height: 50px;
}
.side-bottom {
    width: 100%;
    margin-top: auto;
    display: flex;
    flex-direction: column;
    align-items: center;
}
.badge {
    position: absolute;
    left: 36px;
    top: 8px;
    padding: 0 4px;
    border-radius: 10px;
    background-color: #0081b0;
    color: #fff;
    font-size: 14px;
    line-height: 20px;
}
.user {
    margin-top: 14px;
    border: 1px solid #0081b0;
    border-radius: 50%;
    background-color: #fff;
}
.user svg {
    width: 41px;
    height: 41px;
}

/* Main */
.main {
    flex: 1;
    min-width: 0;
}
.topbar {
    height: 67px;
    display: flex;
    align-items: center;
    gap: 13px;
    padding: 0 23px;
    border-bottom: 1px solid #dae4ed;
}
.menu {
    display: grid;
    gap: 3px;
}
.menu i {
    width: 17px;
    height: 3px;
    background-color: #003055;
}
.breadcrumb {
    font-size: 20px;
}
.sep {
    margin: 0 11px 0 7px;
}
.muted {
    color: #777;
}
.form {
    padding: 37px 13px 0;
}
h2 {
    display: flex;
    align-items: center;
    gap: 12px;
    margin: 0;
    font-size: 23px;
    font-weight: 500;
    line-height: 30px;
}
.caret {
    margin-bottom: 8px;
    border: 10px solid transparent;
    border-top-color: #003055;
    border-bottom: none;
}
.group {
    padding-left: 12px;
    margin-bottom: 30px;
}
h2 + .group {
    margin-top: 56px;
}
h3 {
    margin: 0 0 5px;
    color: #0081b0;
    font-size: 22px;
    font-weight: 700;
    line-height: 35px;
}
dl {
    display: grid;
    grid-template-columns: 180px 1fr;
    column-gap: 19px;
    margin: 0;
}
dt {
    font-weight: 700;
}
dd {
    margin: 0;
}
.loose {
    row-gap: 6px;
}
.help {
    display: inline-block;
    width: 15px;
    height: 15px;
    margin-left: 2px;
    vertical-align: -2px;
}
.signature {
    padding-bottom: 6px;
}
.messaging {
    margin-top: 48px;
    margin-bottom: 46px;
}
h2 + .pos {
    margin: 38px 0 0;
}
.pager {
    display: flex;
    align-items: center;
    justify-content: center;
    gap: 24px;
    height: 65px;
    margin-top: 37px;
    padding-right: 120px;
    border-top: 1px solid #dae4ed;
    border-bottom: 1px solid #dae4ed;
}
.pager span {
    margin-right: -6px;
}

/* Things at the right edge */
.panel-toggle {
    position: absolute;
    right: 0;
    top: 241px;
    width: 23px;
    height: 26px;
    padding-left: 6px;
    border: 1px solid #dae4ed;
    border-right: none;
}
.scroll-thumb {
    position: absolute;
    right: 0;
    top: 683px;
    width: 4px;
    height: 143px;
    background-color: #888;
}

/* Chat window */
.chat {
    position: absolute;
    right: 4px;
    bottom: 0;
    width: 406px;
    background-color: #fff;
    box-shadow: -4px -4px 16px rgba(0, 0, 0, 0.4);
    font-size: 15px;
}
.chat-head {
    display: flex;
    align-items: center;
    gap: 18px;
    height: 43px;
    padding: 0 13px 0 10px;
    background-color: #003055;
    color: #fff;
}
.status {
    width: 13px;
    height: 13px;
    border: 2px solid #fff;
    border-radius: 50%;
}
.chat-title {
    flex: 1;
    margin-left: -15px;
    font-weight: 500;
}
.chat-body {
    height: 228px;
    padding: 12px;
}
.day {
    display: flex;
    align-items: center;
    gap: 13px;
    color: #0081b0;
    font-weight: 700;
}
.day::before, .day::after {
    content: "";
    flex: 1;
    border-top: 1px solid #d5d5d5;
}
.day span {
    position: relative;
}
.ibeam {
    position: absolute;
    right: 3px;
    top: 3px;
}
.message {
    display: flex;
    gap: 7px;
    margin-top: 14px;
}
.avatar {
    flex: none;
    width: 44px;
    height: 44px;
    margin-top: 3px;
}
.message-main {
    flex: 1;
}
.message-head {
    display: flex;
    align-items: center;
    gap: 5px;
    color: #777;
}
.message-head a {
    font-weight: 700;
}
.message-head time {
    margin-left: auto;
    font-size: 14px;
}
.message p {
    display: flex;
    align-items: center;
    gap: 4px;
    margin: 3px 0 0;
    color: #33597a;
}
.emoji {
    width: 25px;
    height: 25px;
}
.emojis {
    display: grid;
    grid-template-columns: repeat(11, 35px);
    padding: 1px 0 13px 2px;
    border-top: 1px solid #ddd;
}
.emojis button {
    height: 41px;
    display: flex;
    align-items: center;
    justify-content: center;
}
.composer {
    display: flex;
    align-items: center;
    gap: 28px;
    height: 47px;
    padding: 2px 11px 0 12px;
    border-top: 1px solid #ddd;
}
.composer input {
    flex: 1;
    min-width: 0;
    padding: 0;
    border: none;
    outline: none;
    color: #33597a;
    font: inherit;
    font-size: 16px;
}
```
